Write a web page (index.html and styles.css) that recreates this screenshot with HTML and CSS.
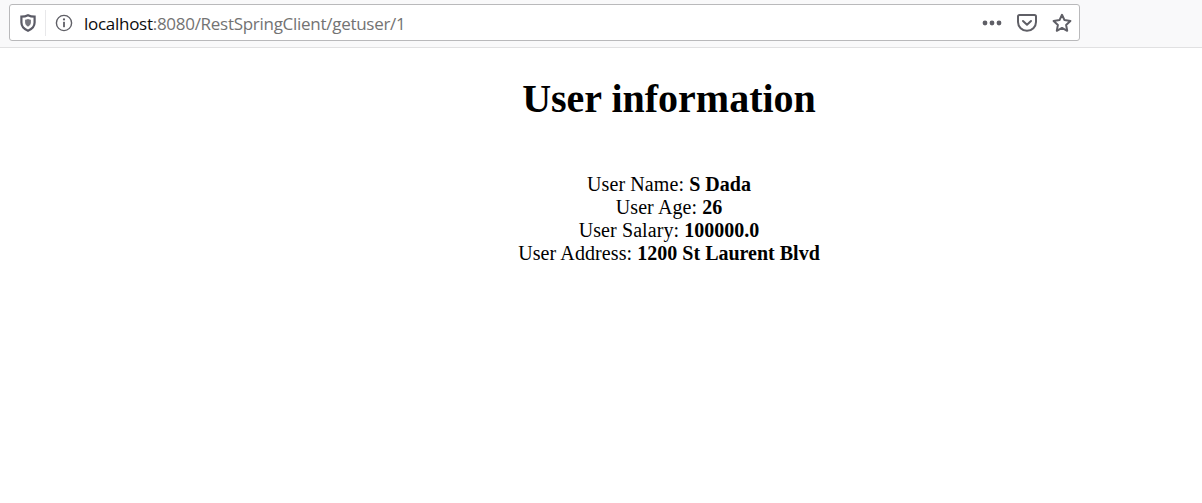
FILE: index.html
```html
<!DOCTYPE html>
<html lang="en">
<head>
<meta charset="utf-8">
<title>User information</title>
<link rel="stylesheet" href="styles.css">
</head>
<body>
<header class="toolbar">
  <div class="urlbar">
    <svg class="icon shield" viewBox="0 0 16 18" width="16" height="18"><path d="M8 1.2 C10 2.2 12.5 2.6 14.6 2.6 L14.6 8.5 C14.6 12.4 11.6 15.2 8 16.8 C4.4 15.2 1.4 12.4 1.4 8.5 L1.4 2.6 C3.5 2.6 6 2.2 8 1.2 Z" fill="none" stroke="#5b5b66" stroke-width="2.2"/><path d="M8 5 C9 5.5 10.1 5.7 10.9 5.7 L10.9 8.6 C10.9 10.4 9.6 11.8 8 12.7 C6.4 11.8 5.1 10.4 5.1 8.6 L5.1 5.7 C5.9 5.7 7 5.5 8 5 Z" fill="#77777f"/></svg>
    <span class="divider"></span>
    <svg class="icon info" viewBox="0 0 18 18" width="18" height="18"><circle cx="9" cy="9" r="7.6" fill="none" stroke="#5f5f66" stroke-width="1.4"/><circle cx="9" cy="5.4" r="1.1" fill="#5f5f66"/><rect x="8.1" y="7.8" width="1.8" height="5.4" fill="#5f5f66"/></svg>
    <div class="url"><span class="host">localhost</span><span class="rest">:8080/RestSpringClient/getuser/1</span></div>
    <div class="actions">
      <svg class="icon" viewBox="0 0 20 6" width="20" height="6"><circle cx="3" cy="3" r="2.4" fill="#5f5f66"/><circle cx="10" cy="3" r="2.4" fill="#5f5f66"/><circle cx="17" cy="3" r="2.4" fill="#5f5f66"/></svg>
      <svg class="icon" viewBox="0 0 20 18" width="20" height="18"><path d="M2.5 1 H17.5 A1.5 1.5 0 0 1 19 2.5 V8 A9 8.8 0 0 1 1 8 V2.5 A1.5 1.5 0 0 1 2.5 1 Z" fill="none" stroke="#5f5f66" stroke-width="2"/><path d="M6 7 L10 10.8 L14 7" fill="none" stroke="#5f5f66" stroke-width="2" stroke-linecap="round" stroke-linejoin="round"/></svg>
      <svg class="icon" viewBox="0 0 20 20" width="20" height="20"><path d="M10 1.8 L12.5 7.1 L18.4 7.9 L14.1 11.9 L15.2 17.8 L10 14.9 L4.8 17.8 L5.9 11.9 L1.6 7.9 L7.5 7.1 Z" fill="none" stroke="#5f5f66" stroke-width="2" stroke-linejoin="round"/></svg>
    </div>
  </div>
</header>
<main class="content">
  <h1 class="title">User information</h1>
  <div class="details">
    <div>User Name: <b>S Dada</b></div>
    <div>User Age: <b>26</b></div>
    <div>User Salary: <b>100000.0</b></div>
    <div>User Address: <b>1200 St Laurent Blvd</b></div>
  </div>
</main>
</body>
</html>
```

FILE: styles.css
```css
* { box-sizing: border-box; }
html, body { margin: 0; background: #fff; }
body { height: 503px; overflow: hidden; }
.toolbar {
  height: 48px;
  background: #f9f9fa;
  border-bottom: 1px solid #e1e1e2;
  padding: 4px 122px 0 9px;
}
.urlbar {
  height: 37px;
  background: #fff;
  border: 1px solid #b9b9bb;
  border-radius: 3px;
  display: flex;
  align-items: center;
  padding-left: 10px;
  padding-right: 7px;
}
.icon { display: block; flex: none; }
.divider {
  width: 1px;
  height: 26px;
  background: #e8e8ea;
  margin-left: 9px;
  margin-right: 9px;
}
.url {
  margin-left: 11px;
  margin-top: 2px;
  font: 17px/22px "Open Sans", "Noto Sans", sans-serif;
  white-space: nowrap;
  letter-spacing: -0.28px;
}
.host { color: #0c0c0d; }
.rest { color: #737373; }
.actions {
  margin-left: auto;
  display: flex;
  align-items: center;
  gap: 15px;
}
.content {
  padding-left: 136px;
  text-align: center;
  font-family: "Liberation Serif", serif;
  color: #000;
}
.title {
  margin: 28px 0 0;
  font-size: 40px;
  line-height: 46px;
  font-weight: bold;
}
.details {
  margin-top: 51px;
  font-size: 20px;
  line-height: 23px;
  letter-spacing: 0.1px;
}
.details b { letter-spacing: 0; }
```
